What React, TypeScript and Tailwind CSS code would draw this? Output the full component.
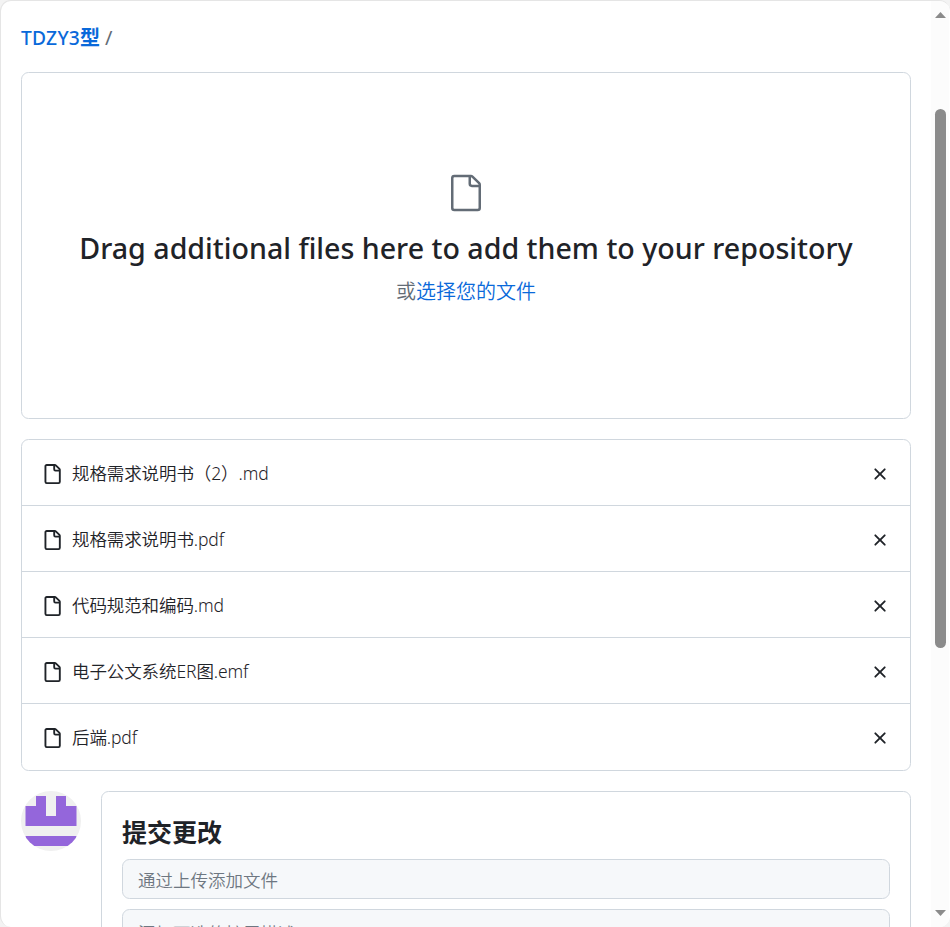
import React from 'react';

const FILES = [
  '规格需求说明书（2）.md',
  '规格需求说明书.pdf',
  '代码规范和编码.md',
  '电子公文系统ER图.emf',
  '后端.pdf',
];

function FileIcon() {
  return (
    <svg width="20" height="20" viewBox="0 0 16 16" fill="currentColor" className="shrink-0">
      <path d="M2 1.75C2 .784 2.784 0 3.75 0h6.586c.464 0 .909.184 1.237.513l2.914 2.914c.329.328.513.773.513 1.237v9.586A1.75 1.75 0 0 1 13.25 16h-9.5A1.75 1.75 0 0 1 2 14.25Zm1.75-.25a.25.25 0 0 0-.25.25v12.5c0 .138.112.25.25.25h9.5a.25.25 0 0 0 .25-.25V6h-2.75A1.75 1.75 0 0 1 9 4.25V1.5Zm6.75.062V4.25c0 .138.112.25.25.25h2.688l-.011-.013-2.914-2.914-.013-.011Z" />
    </svg>
  );
}

function LargeFileIcon() {
  return (
    <svg width="40" height="40" viewBox="0 0 24 24" fill="currentColor">
      <path d="M3 3a2 2 0 0 1 2-2h9.982a2 2 0 0 1 1.414.586l4.018 4.018A2 2 0 0 1 21 7.018V21a2 2 0 0 1-2 2H5a2 2 0 0 1-2-2Zm2-.5a.5.5 0 0 0-.5.5v18a.5.5 0 0 0 .5.5h14a.5.5 0 0 0 .5-.5V8.5h-4a2 2 0 0 1-2-2v-4Zm10 0v4a.5.5 0 0 0 .5.5h4a.5.5 0 0 0-.146-.336l-4.018-4.018A.5.5 0 0 0 15 2.5Z" />
    </svg>
  );
}

function CloseIcon() {
  return (
    <svg width="20" height="20" viewBox="0 0 16 16" fill="currentColor">
      <path d="M3.72 3.72a.75.75 0 0 1 1.06 0L8 6.94l3.22-3.22a.749.749 0 0 1 1.275.326.749.749 0 0 1-.215.734L9.06 8l3.22 3.22a.749.749 0 0 1-.326 1.275.749.749 0 0 1-.734-.215L8 9.06l-3.22 3.22a.751.751 0 0 1-1.042-.018.751.751 0 0 1-.018-1.042L6.94 8 3.72 4.78a.75.75 0 0 1 0-1.06Z" />
    </svg>
  );
}

function Avatar() {
  return (
    <svg width="60" height="60" viewBox="0 0 60 60" className="shrink-0 rounded-full bg-[#f0f0f0]">
      <path d="M15 5h10v20h10V5h10v10h10.5v20H4.5V15H15ZM4.5 45h51v10h-51Z" fill="#9466db" />
    </svg>
  );
}

function Scrollbar() {
  return (
    <div className="flex w-[18px] shrink-0 flex-col items-center bg-[#fcfcfc] pl-[1px]">
      <svg width="11" height="6" viewBox="0 0 11 6" className="mt-[11px] shrink-0">
        <path d="M5.5 0 11 6H0Z" fill="#8b8b8b" />
      </svg>
      <div className="mt-[91px] h-[539px] w-[11px] shrink-0 rounded-full bg-[#8b8b8b]" />
      <svg width="11" height="6" viewBox="0 0 11 6" className="mt-auto mb-[11px] shrink-0">
        <path d="M0 0h11L5.5 6Z" fill="#8b8b8b" />
      </svg>
    </div>
  );
}

export default function App() {
  return (
    <div className="h-[927px] w-[950px] overflow-hidden bg-[#f3f3f3] font-['Noto_Sans','Noto_Sans_CJK_SC',sans-serif] text-[#1f2328]">
      <div className="flex h-[927px] overflow-hidden rounded-[11px] border-t border-l border-[#e5e5e5] bg-white">
        <main className="w-[930px] shrink-0 pr-5 pl-5">
          <nav className="flex h-[71px] items-center pt-[3px] text-[20px] leading-[30px]">
            <a href="#" className="text-[19.2px] font-[550] tracking-[0.25px] text-[#0969da]">
              TDZY3<span className="text-[20px] font-bold tracking-normal">型</span>
            </a>
            <span className="ml-[5px] font-normal text-[#636c76]">/</span>
          </nav>

          {/* Drop zone */}
          <section className="flex h-[347px] flex-col items-center rounded-[7.5px] border border-[#d0d7de] pt-[100px]">
            <div className="text-[#636c76]">
              <LargeFileIcon />
            </div>
            <h2 className="mt-[13px] text-[28.6px] leading-[44px] font-medium whitespace-nowrap">
              Drag additional files here to add them to your repository
            </h2>
            <p className="mt-[7px] text-[20px] leading-[30px] font-[350] text-[#636c76]">
              或<a href="#" className="text-[#0969da]">选择您的文件</a>
            </p>
          </section>

          {/* Uploaded files */}
          <ul className="mt-5 h-[332px] rounded-[7.5px] border border-[#d0d7de]">
            {FILES.map((name) => (
              <li key={name} className="flex h-[66px] items-center border-b border-[#d0d7de] pt-[3px] pr-5 pl-5 last:border-transparent">
                <FileIcon />
                <span className="ml-[10px] pb-[2px] text-[17.5px] leading-[26px] font-[350] tracking-[-0.1px]">{name}</span>
                <button type="button" aria-label="移除" className="ml-auto">
                  <CloseIcon />
                </button>
              </li>
            ))}
          </ul>

          {/* Commit form */}
          <div className="mt-5 flex gap-5">
            <Avatar />
            <form className="h-[200px] flex-1 rounded-[7.5px] border border-[#d0d7de] px-5 pt-[21px]">
              <h3 className="text-[25px] leading-[38px] font-bold">提交更改</h3>
              <input
                placeholder="通过上传添加文件"
                className="mt-[8px] block h-10 w-full rounded-[7.5px] border border-[#d0d7de] bg-[#f6f8fa] px-[15px] pt-[2px] text-[17.5px] font-[350] placeholder:text-[#6e7781]"
              />
              <textarea
                placeholder="添加可选的扩展描述..."
                className="mt-[10px] block h-[120px] w-full resize-none rounded-[7.5px] border border-[#d0d7de] bg-[#f6f8fa] px-[15px] py-[11px] text-[17.5px] leading-[25px] font-[350] placeholder:text-[#6e7781]"
              />
            </form>
          </div>
        </main>
        <Scrollbar />
      </div>
    </div>
  );
}
